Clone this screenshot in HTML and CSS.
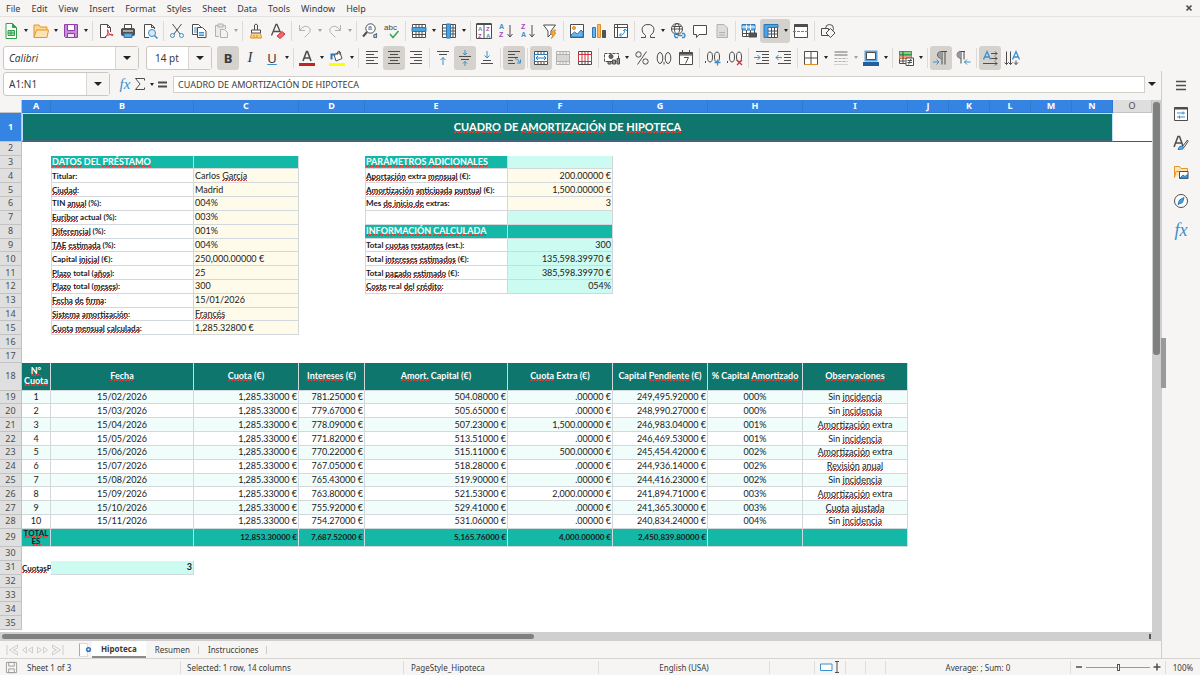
FILE: index.html
```
<!DOCTYPE html>
<html lang="es">
<head>
<meta charset="utf-8">
<title>Hipoteca</title>
<link rel="stylesheet" href="styles.css">
</head>

<body>
<nav class="menubar">
  <button>File</button><button>Edit</button><button>View</button><button>Insert</button><button>Format</button><button>Styles</button><button>Sheet</button><button>Data</button><button>Tools</button><button>Window</button><button>Help</button>
  <button class="close" aria-label="Close"><svg viewBox="0 0 8 8"><path d="M1.5 1.5l5 5M6.5 1.5l-5 5" stroke-width="1.7"/></svg></button>
</nav>

<!-- standard toolbar -->
<div class="toolbar" role="toolbar" aria-label="Standard">
  <button class="tb" aria-label="New"><svg viewBox="0 0 16 16"><path d="M3 .5h6.500l4 4v11H3z" fill="#fff" stroke="#33a04c"/><path d="M9.500.5v4h4z" fill="#33a04c" stroke="#33a04c"/><path d="M5 7.500h6.500v5H5zM5 10h6.500M8 7.500v5" fill="#a9ddb4" stroke="#33a04c"/></svg></button><button class="caret" aria-label="New options"></button>
  <button class="tb" aria-label="Open"><svg viewBox="0 0 16 16"><path d="M1 14.500V2h5l1.500 2H14v3" fill="#fbd79b" stroke="#e59728"/><path d="M1 14.500L3.500 7h12l-1.500 7.500z" fill="#fde2b3" stroke="#e59728"/></svg></button><button class="caret" aria-label="Open options"></button>
  <button class="tb" aria-label="Save"><svg viewBox="0 0 16 16"><path d="M1.500 1.500h13v13h-12l-1-1z" fill="#c98bd9" stroke="#8e3ea8"/><path d="M4.500 1.500h7v6h-7z" fill="#fff" stroke="#8e3ea8"/><path d="M4.500 10.500h7v4h-7z" fill="#f4e4f8" stroke="#8e3ea8"/></svg></button><button class="caret" aria-label="Save options"></button>
  <i class="sep"></i>
  <button class="tb" aria-label="Export as PDF"><svg viewBox="0 0 16 16"><path d="M8 14.500H2.500V1.500h7l3 3V9M9.500 1.500v3h3" fill="#fff"/><path d="M7 14c3-2 3.500-6 3-7-.8-1-1.500 1 1.500 4 1.500 1.500 4 2 3.500.8-.8-1-5-.3-8 2.200z" stroke="#d3303a"/></svg></button>
  <button class="tb" aria-label="Print"><svg viewBox="0 0 16 16"><path d="M4.500 6V1.500h7V6" fill="#fff"/><rect x="1.500" y="5.500" width="13" height="7" rx="1" fill="#4b5358"/><path d="M4 10.500h8v4H4z" fill="#62a9e0" stroke="#2b78b8"/><path d="M3 8h10" stroke="#fff"/></svg></button>
  <button class="tb" aria-label="Print Preview"><svg viewBox="0 0 16 16"><path d="M7 14.500H2.500V1.500h7l3 3V6M9.500 1.500v3h3" fill="#fff"/><circle cx="10" cy="10" r="3.500" fill="#d3e9f8" stroke="#3a8fcc"/><path d="M12.500 12.500l3 3" stroke="#3a8fcc" stroke-width="1.500"/></svg></button>
  <i class="sep"></i>
  <button class="tb" aria-label="Cut"><svg viewBox="0 0 16 16"><path d="M3.500 1l7.500 10M12.500 1L5 11"/><circle cx="3.500" cy="12.500" r="2" stroke="#3a8fcc"/><circle cx="12.500" cy="12.500" r="2" stroke="#3a8fcc"/></svg></button>
  <button class="tb" aria-label="Copy"><svg viewBox="0 0 16 16"><path d="M1.500 1.500h6l2.500 2.500v7.500H1.500z" fill="#fff"/><path d="M3 5h4M3 7h4M3 9h3" stroke="#3a8fcc"/><path d="M6.500 4.500h5l3.500 3.500v6.500H6.500z" fill="#fff"/><path d="M8 9.500h5M8 11h5M8 12.500h5" stroke="#3a8fcc"/></svg></button>
  <button class="tb" aria-label="Paste" disabled><svg viewBox="0 0 16 16"><path d="M6 13.500H2.500v-11h10V6" fill="#ddd"/><path d="M5 1h5v3H5z" fill="#ccc"/><path d="M7.500 6.500h4l3 3v5h-7z" fill="#eee"/></svg></button><button class="caret" aria-label="Paste options" disabled></button>
  <i class="sep"></i>
  <button class="tb" aria-label="Clone Formatting"><svg viewBox="0 0 16 16"><path d="M6.500 7V2q1.500-2 3 0v5"/><path d="M3.500 7h9v3h-9z" fill="#fff"/><path d="M3.500 10.500l-1 4.500h11l-1-4.500z" fill="#fbd18b" stroke="#e08f24"/><path d="M6 12v3M9 12v3" stroke="#e08f24"/></svg></button>
  <button class="tb" aria-label="Clear Formatting"><svg viewBox="0 0 16 16"><path d="M1.500 12.500L6 1.500h1l3.500 8M3.500 8.500h6" stroke-width="1.300"/><path d="M7 13l5-4.500 3 2.500-5 4.500z" fill="#f06b6b" stroke="#d3303a"/></svg></button>
  <i class="sep"></i>
  <button class="tb" aria-label="Undo" disabled><svg viewBox="0 0 16 16"><path d="M2.500 2v5.500H8M3 7q4-5.500 8.500-3 4 3.500-1 7.500l-3 3"/></svg></button><button class="caret" aria-label="Undo list" disabled></button>
  <button class="tb" aria-label="Redo" disabled><svg viewBox="0 0 16 16"><path d="M13.500 2v5.500H8M13 7Q9 1.500 4.500 4q-4 3.500 1 7.500l3 3"/></svg></button><button class="caret" aria-label="Redo list" disabled></button>
  <i class="sep"></i>
  <button class="tb" aria-label="Find and Replace"><svg viewBox="0 0 16 16"><circle cx="8.500" cy="5.500" r="4.700" fill="#fff"/><path d="M5 9l-4 4.500" stroke-width="2"/><text x="6" y="7" class="gb">a</text><text x="11" y="15" class="gd">d</text></svg></button>
  <button class="tb" aria-label="Spelling"><svg viewBox="0 0 16 16"><text x="0" y="7" class="gd abc">abc</text><path d="M6 11l3 3.500L14.500 8" stroke="#35a557" stroke-width="1.500"/></svg></button>
  <i class="sep"></i>
  <button class="tb" aria-label="Row"><svg viewBox="0 0 16 16"><path d="M1.500 1.500h13v13h-13z" fill="#fff"/><path d="M1 4.500h14v4H1z" fill="#4ba3df" stroke="#2b78b8"/><path d="M1.500 11.500h13M5 1.500v3M8 1.500v3M11 1.500v3M5 8.500v6M8 8.500v6M11 8.500v6"/></svg></button><button class="caret" aria-label="Row options"></button>
  <button class="tb" aria-label="Column"><svg viewBox="0 0 16 16"><path d="M1.500 1.500h13v13h-13z" fill="#fff"/><path d="M5.500 1h4v14h-4z" fill="#4ba3df" stroke="#2b78b8"/><path d="M12 1.500v13M1.500 5h4M1.500 8h4M1.500 11h4M9.500 5h5M9.500 8h5M9.500 11h5"/></svg></button><button class="caret" aria-label="Column options"></button>
  <i class="sep"></i>
  <button class="tb" aria-label="Sort"><svg viewBox="0 0 16 16"><path d="M.5 1h15v14.500H.5zM8 1v14" fill="#fff"/><path d="M.5 1h15" stroke-width="2"/><text x="2" y="8" class="gb sm">A</text><text x="2" y="15" class="gp sm">Z</text><text x="10" y="8" class="gp sm">Z</text><text x="10" y="15" class="gb sm">A</text></svg></button>
  <button class="tb" aria-label="Sort Ascending"><svg viewBox="0 0 16 16"><text x="1" y="6" class="gb">A</text><text x="1" y="14" class="gp">Z</text><path d="M12 2v12M9.500 11l2.500 3 2.500-3"/></svg></button>
  <button class="tb" aria-label="Sort Descending"><svg viewBox="0 0 16 16"><text x="1" y="6" class="gp">Z</text><text x="1" y="14" class="gb">A</text><path d="M12 2v12M9.500 11l2.500 3 2.500-3"/></svg></button>
  <button class="tb" aria-label="AutoFilter"><svg viewBox="0 0 16 16"><path d="M1.500 2h12L9 8v3l-3 3V8z" fill="#fff"/><path d="M11.500 7L9 11.500h2L9.500 15.500 14 10h-2l1.500-3z" fill="#fba94c" stroke="#e08f24"/></svg></button>
  <i class="sep"></i>
  <button class="tb" aria-label="Image"><svg viewBox="0 0 16 16"><path d="M1.500 1.500h13v13h-13z" fill="#fff"/><path d="M2 14v-2l3.500-3 3 2L12 7l2 2v5z" fill="#6db3e5" stroke="#2b78b8"/><circle cx="5" cy="5" r="1.500" fill="#fba94c" stroke="#e08f24"/></svg></button>
  <button class="tb" aria-label="Chart"><svg viewBox="0 0 16 16"><path d="M1.500 4.500h3v10h-3z" fill="#6db3e5" stroke="#2b78b8"/><path d="M6.500 1.500h3v13h-3z" fill="#fbb763" stroke="#e08f24"/><path d="M11.500 7.500h3v7h-3z" fill="#555"/></svg></button>
  <button class="tb" aria-label="Pivot Table"><svg viewBox="0 0 16 16"><path d="M1.500 1.500h13v13h-13zM1.500 4.500h13M4.500 1.500v13" fill="#fff"/><path d="M6.500 12q5 1 5.500-6M10 8l2-2 2 2M8.500 10l-2 2 2 2" stroke="#3a8fcc"/></svg></button>
  <i class="sep"></i>
  <button class="tb" aria-label="Special Character"><svg viewBox="0 0 16 16"><path d="M1 14.500h4.500v-2Q2 10 2 6.500 2.500 1.500 8 1.500t6 5q0 3.500-3.500 6v2H15"/></svg></button><button class="caret" aria-label="Recent characters"></button>
  <button class="tb" aria-label="Hyperlink"><svg viewBox="0 0 16 16"><circle cx="7" cy="6" r="5.500" fill="#fff"/><ellipse cx="7" cy="6" rx="2.500" ry="5.500"/><path d="M1.500 6h11M2.500 3.500h9"/><path d="M8 10.500H5.500q-2 2 0 4H8M12 10.500h2q2 2 0 4h-2M7.500 12.500h5" stroke="#3a8fcc" stroke-width="1.300"/></svg></button>
  <button class="tb" aria-label="Comment"><svg viewBox="0 0 16 16"><path d="M1.500 2.500h13v9H7L4.500 14.500v-3h-3z" fill="#fff"/></svg></button>
  <button class="tb" aria-label="Headers and Footers" disabled><svg viewBox="0 0 16 16"><path d="M3 1.500h7l3.500 3.500v9.500H3zM5 9.500h6M5 12h6" fill="#bbb"/></svg></button>
  <i class="sep"></i>
  <button class="tb" aria-label="Define Print Area"><svg viewBox="0 0 16 16"><path d="M1.500 1.500h12v12h-12zM1.500 10.500h12M5.500 7v6.500M9.500 7v6.500" fill="#fff"/><path d="M1 1.500h13v5.500H1z" fill="#6db3e5" stroke="#2b78b8"/><path d="M5.500 1.500V7M9.500 1.500V7M1 4h13" stroke="#fff"/><path d="M8 10h7.500v4H8z" fill="#4b5358"/></svg></button>
  <span class="pair on"><button class="tb" aria-label="Freeze Rows and Columns" aria-pressed="true"><svg viewBox="0 0 16 16"><path d="M1.500 1.500h13v13h-13z" fill="#fff"/><path d="M1 1.500h14v3H5v10H1z" fill="#4ba3df" stroke="#2b78b8"/><path d="M5 8h10M5 11h10M8.500 4.500v10M11.500 4.500v10"/></svg></button><button class="caret" aria-label="Freeze options"></button></span>
  <button class="tb" aria-label="Split Window"><svg viewBox="0 0 16 16"><path d="M1.500 1.500h13v13h-13z" fill="#fff"/><path d="M1.500 2.500h13" stroke-width="3"/><path d="M0 8.500h16" stroke="#3a8fcc" stroke-dasharray="3 1"/></svg></button>
  <i class="sep"></i>
  <button class="tb" aria-label="Show Draw Functions"><svg viewBox="0 0 16 16"><circle cx="9.500" cy="5.500" r="4"/><path d="M1.500 5.500h7v7h-7z" fill="#f6f5f4"/><path d="M10.500 5.500l4.500 4.500-4.500 4.500L6 10z" fill="#f6f5f4"/></svg></button>
</div>

<!-- formatting toolbar -->
<div class="toolbar format" role="toolbar" aria-label="Formatting">
  <span class="combo fontname"><input aria-label="Font Name" value="Calibri"><button aria-label="Font list"></button></span>
  <span class="combo fontsize"><input aria-label="Font Size" value="14 pt"><button aria-label="Size list"></button></span>
  <button class="tb on letter bold" aria-pressed="true">B</button>
  <button class="tb letter italic">I</button>
  <button class="tb letter under">U</button><button class="caret" aria-label="Underline options"></button>
  <i class="sep"></i>
  <button class="tb" aria-label="Font Color"><svg viewBox="0 0 16 16"><path d="M0 13h16v3H0z" fill="#c9211e" stroke="none"/><path d="M4 11L7.500 1.500h1L12 11M5 8h6" stroke-width="1.600"/></svg></button><button class="caret" aria-label="Font color list"></button>
  <button class="tb" aria-label="Background Color"><svg viewBox="0 0 16 16"><path d="M0 13h16v3H0z" fill="#ff0" stroke="none"/><path d="M5 4.500l6-2 2 6-6 2.500z" fill="#fff"/><path d="M8 5q0-4 2-4t1 4"/><path d="M2.500 9.500v-5h4" stroke="#2b78b8" stroke-width="2"/></svg></button><button class="caret" aria-label="Background color list"></button>
  <i class="sep"></i>
  <button class="tb" aria-label="Align Left"><svg viewBox="0 0 16 16"><path d="M2 1.500h12M2 4.500h8M2 7.500h12M2 10.500h8M2 13.500h12"/></svg></button>
  <button class="tb on" aria-label="Center Horizontally" aria-pressed="true"><svg viewBox="0 0 16 16"><path d="M2 1.500h12M4 4.500h8M2 7.500h12M4 10.500h8M2 13.500h12"/></svg></button>
  <button class="tb" aria-label="Align Right"><svg viewBox="0 0 16 16"><path d="M2 1.500h12M6 4.500h8M2 7.500h12M6 10.500h8M2 13.500h12"/></svg></button>
  <i class="sep"></i>
  <button class="tb" aria-label="Align Top"><svg viewBox="0 0 16 16"><path d="M2 1.500h12M4 4.500h8"/><path d="M8 15V7.500M5.500 10L8 7.500l2.500 2.500" stroke="#3a8fcc"/></svg></button>
  <button class="tb on" aria-label="Center Vertically" aria-pressed="true"><svg viewBox="0 0 16 16"><path d="M2 6.500h12M4 9.500h8"/><path d="M8 0v5M6 3l2 2 2-2M8 16v-4.500M6 13.500l2-2 2 2" stroke="#3a8fcc"/></svg></button>
  <button class="tb" aria-label="Align Bottom"><svg viewBox="0 0 16 16"><path d="M4 10.500h8M2 13.500h12"/><path d="M8 1v7M5.500 5.500L8 8l2.500-2.500" stroke="#3a8fcc"/></svg></button>
  <i class="sep"></i>
  <button class="tb on" aria-label="Wrap Text" aria-pressed="true"><svg viewBox="0 0 16 16"><path d="M2 1.500h12M2 4.500h7M2 7.500h10M2 10.500h5M2 13.500h7"/><path d="M9 8.500q3 0 5 4.500M14.500 9.500V13H11" stroke="#3a8fcc"/></svg></button>
  <i class="sep"></i>
  <button class="tb on" aria-label="Merge and Center Cells" aria-pressed="true"><svg viewBox="0 0 16 16"><path d="M1.500 1.500h13v13h-13zM5 1.500v13M8 1.500v13M11 1.500v13" fill="#fff"/><path d="M1.500 4.500h13v7h-13z" fill="#fff" stroke="#2b78b8"/><path d="M3 8h10M5 6L3 8l2 2M11 6l2 2-2 2" stroke="#2b78b8"/></svg></button>
  <button class="tb" aria-label="Merge Cells" disabled><svg viewBox="0 0 16 16"><path d="M1.500 1.500h13v13h-13zM5 1.500v13M8 1.500v13M11 1.500v13" fill="#eee"/><path d="M1.500 4.500h13v7h-13z" fill="#aaa"/></svg></button>
  <button class="tb" aria-label="Unmerge Cells"><svg viewBox="0 0 16 16"><path d="M1.500 1.500h13v13h-13zM5 1.500v13M8 1.500v13M11 1.500v13" fill="#fff"/><path d="M1.500 4.500h13v7h-13zM5 4.500v7M8 4.500v7M11 4.500v7" fill="#fff" stroke="#d3303a"/></svg></button>
  <i class="sep"></i>
  <button class="tb" aria-label="Format as Currency"><svg viewBox="0 0 16 16"><path d="M.5 3.500h14v8H.5z" fill="#fff" stroke-dasharray="3 1"/><circle cx="7" cy="6.500" r="2" fill="#666"/><path d="M4 11.500h3v2.500H4zM8.500 10h3v4h-3zM13 8.500h2.500V14H13z" fill="#999"/></svg></button><button class="caret" aria-label="Currency list"></button>
  <button class="tb" aria-label="Format as Percent"><svg viewBox="0 0 16 16"><circle cx="4.500" cy="4.500" r="2.700"/><circle cx="11.500" cy="11.500" r="2.700"/><path d="M12.500 1.500l-9 13"/></svg></button>
  <button class="tb" aria-label="Format as Number"><svg viewBox="0 0 16 16"><ellipse cx="4" cy="8" rx="2.800" ry="5.500"/><ellipse cx="12" cy="8" rx="2.800" ry="5.500"/><path d="M8 12v2.500"/></svg></button>
  <button class="tb" aria-label="Format as Date"><svg viewBox="0 0 16 16"><path d="M1.500 2.500h13v12h-13zM1.500 5h13M4.500 0v4M11.500 0v4" fill="#fff"/><path d="M1.500 3.500h13" stroke-width="2"/><path d="M6 7.500h4.500l-3 6"/></svg></button>
  <i class="sep"></i>
  <button class="tb" aria-label="Add Decimal Place"><svg viewBox="0 0 16 16"><ellipse cx="5" cy="7" rx="2.500" ry="5"/><ellipse cx="12" cy="7" rx="2.500" ry="5"/><path d="M.5 11v2"/><path d="M9.500 12.500h6M12.500 9.500v6" stroke="#3a8fcc" stroke-width="1.300"/></svg></button>
  <button class="tb" aria-label="Delete Decimal Place"><svg viewBox="0 0 16 16"><ellipse cx="5" cy="7" rx="2.500" ry="5"/><ellipse cx="12" cy="7" rx="2.500" ry="5"/><path d="M.5 11v2"/><path d="M10 10l5 5M15 10l-5 5" stroke="#d3303a" stroke-width="1.300"/></svg></button>
  <i class="sep"></i>
  <button class="tb" aria-label="Increase Indent"><svg viewBox="0 0 16 16"><path d="M2 1.500h13M8 4.500h7M8 7.500h7M8 10.500h7M2 13.500h13"/><path d="M0 7.500h6M3.500 5L6 7.500 3.500 10" stroke="#3a8fcc"/></svg></button>
  <button class="tb" aria-label="Decrease Indent"><svg viewBox="0 0 16 16"><path d="M2 1.500h13M8 4.500h7M8 7.500h7M8 10.500h7M2 13.500h13"/><path d="M6 7.500H0M2.500 5L0 7.500 2.500 10" stroke="#3a8fcc"/></svg></button>
  <i class="sep"></i>
  <button class="tb" aria-label="Borders"><svg viewBox="0 0 16 16"><path d="M1.500 1.500h13v13h-13zM8 1.500v13M1.500 8h13" fill="#fff"/><path d="M1.500 14.500h13" stroke="#e08f24"/></svg></button><button class="caret" aria-label="Border list"></button>
  <button class="tb" aria-label="Border Style" disabled><svg viewBox="0 0 16 16"><path d="M1.500 2h13M1.500 5h13" stroke-width="2"/><path d="M1.500 8.500h13M1.500 11.500h13" stroke-dasharray="3 1"/><path d="M1.500 14.500h13" stroke-dasharray="1 1"/></svg></button><button class="caret" aria-label="Border style list" disabled></button>
  <button class="tb" aria-label="Border Color"><svg viewBox="0 0 16 16"><path d="M0 12h16v4H0z" fill="#235f9c" stroke="none"/><path d="M2.500 1.500h11v9h-11z" fill="#fff" stroke="#5ea4dc" stroke-width="2"/><path d="M3.500 2.500h9v7h-9z"/></svg></button><button class="caret" aria-label="Border color list"></button>
  <i class="sep"></i>
  <button class="tb" aria-label="Conditional Formatting"><svg viewBox="0 0 16 16"><path d="M1.500 1.500h12v12h-12z" fill="#fff"/><path d="M1.500 1.500h12v3h-12z" fill="#7fd08f" stroke="#33a04c"/><path d="M1.500 5.500h12v3h-12z" fill="#f29a9a" stroke="#e5772f"/><path d="M1.500 11h6M5 1.500v12"/><path d="M8 8h7.500v7.500H8zM9.500 10.500h4.500M9.500 12.500h4.500M13 9l-2.500 5.500" fill="#fff"/></svg></button><button class="caret" aria-label="Conditional list"></button>
  <i class="sep"></i>
  <button class="tb on" aria-label="Left-To-Right" aria-pressed="true"><svg viewBox="0 0 16 16"><path d="M14 1.500H7.500q-3 .5-3 3.500t4 3.500M9 1.500v13M12 1.500v13"/><path d="M9 1.500v7q-4-.5-4-3.500t4-3.500" fill="#999" stroke="none"/><path d="M0 12h6M3.500 9.500L6 12l-2.500 2.500" stroke="#3a8fcc"/></svg></button>
  <button class="tb" aria-label="Right-To-Left"><svg viewBox="0 0 16 16"><path d="M10 1.500H5q-3 .5-3 3.500T6 8.500M6 1.500v12M9 1.500v8"/><path d="M6 1.500v7Q2 8 2 5t4-3.500" fill="#999" stroke="none"/><path d="M15.500 12H9M12 9.500L9.500 12l2.500 2.500" stroke="#3a8fcc"/></svg></button>
  <i class="sep"></i>
  <button class="tb on" aria-label="Text direction from left to right" aria-pressed="true"><svg viewBox="0 0 16 16"><path d="M1.500 9.500L5 1.500l3.500 8M3 7h4" stroke="#3a8fcc" stroke-width="1.300"/><path d="M9 3.500h6M9 8.500h6M1 13.500h14M13 1.500l2 2-2 2M13 6.500l2 2-2 2M13 11.500l2 2-2 2"/></svg></button>
  <button class="tb" aria-label="Text direction from top to bottom"><svg viewBox="0 0 16 16"><path d="M8.500 9.500L12 1.500l3.500 8M10 7h4" stroke="#3a8fcc" stroke-width="1.300"/><path d="M2.500 1.500v13M6.500 1.500v13M12 10.500v4M.5 12.500l2 2 2-2M4.500 12.500l2 2 2-2M10 12.500l2 2 2-2"/></svg></button>
</div>

<div class="work">
<div class="main">

<div class="formulabar">
  <span class="combo namebox"><input aria-label="Name Box" value="A1:N1"><button aria-label="Names"></button></span>
  <button class="fb fx">fx</button>
  <button class="fb sigma" aria-label="Select Function"><svg viewBox="0 0 12 16"><path d="M10.500 4.500v-2h-9L6 8l-4.500 5.500h9v-2"/></svg></button><button class="caret" aria-label="Functions"></button>
  <button class="fb" aria-label="Formula"><svg viewBox="0 0 12 16"><path d="M2 6.500h9M2 10.500h9" stroke-width="2"/></svg></button>
  <input class="formula" aria-label="Formula input" value="CUADRO DE AMORTIZACIÓN DE HIPOTECA">
  <button class="caret big" aria-label="Expand Formula Bar"></button>
</div>

<div class="sheetrow">
<div class="sheet">
<table>
  <colgroup>
    <col class="w22"><col class="w29"><col class="w143"><col class="w105"><col class="w66"><col class="w143"><col class="w105"><col class="w95"><col class="w95"><col class="w105"><col class="w41"><col class="w41"><col class="w41"><col class="w41"><col class="w41"><col>
  </colgroup>
  <thead>
  <tr><th class="corner"></th><th>A</th><th>B</th><th>C</th><th>D</th><th>E</th><th>F</th><th>G</th><th>H</th><th>I</th><th>J</th><th>K</th><th>L</th><th>M</th><th>N</th><th class="plain">O</th></tr>
  </thead>
  <tbody>
  <tr class="r1"><th class="sel">1</th><td colspan="14" class="title"><span class="sp">CUADRO</span> DE <span class="sp">AMORTIZACIÓN</span> DE <span class="sp">HIPOTECA</span></td><td class="freeze"></td></tr>
  <tr><th>2</th><td colspan="15"></td></tr>
  <tr><th>3</th><td></td><td class="head"><span class="sp">DATOS</span> DEL <span class="sp">PRÉSTAMO</span></td><td class="head"></td><td></td><td class="head"><span class="sp">PARÁMETROS</span> <span class="sp">ADICIONALES</span></td><td class="mint"></td></tr>
  <tr><th>4</th><td></td><td class="lab">Titular:</td><td class="in">Carlos <span class="sp">García</span></td><td></td><td class="lab"><span class="sp">Aportación</span> extra <span class="sp">mensual</span> (€):</td><td class="in num">200.00000 €</td></tr>
  <tr><th>5</th><td></td><td class="lab"><span class="sp">Ciudad</span>:</td><td class="in">Madrid</td><td></td><td class="lab"><span class="sp">Amortización</span> <span class="sp">anticipada</span> <span class="sp">puntual</span> (€):</td><td class="in num">1,500.00000 €</td></tr>
  <tr><th>6</th><td></td><td class="lab">TIN <span class="sp">anual</span> (%):</td><td class="in">004%</td><td></td><td class="lab">Mes <span class="sp">de inicio de</span> extras:</td><td class="in num">3</td></tr>
  <tr><th>7</th><td></td><td class="lab"><span class="sp">Euríbor</span> actual (%):</td><td class="in">003%</td><td></td><td class="lab"></td><td class="mint"></td></tr>
  <tr><th>8</th><td></td><td class="lab"><span class="sp">Diferencial</span> (%):</td><td class="in">001%</td><td></td><td class="head"><span class="sp">INFORMACIÓN</span> <span class="sp">CALCULADA</span></td><td class="head"></td></tr>
  <tr><th>9</th><td></td><td class="lab"><span class="sp">TAE</span> <span class="sp">estimada</span> (%):</td><td class="in">004%</td><td></td><td class="lab">Total <span class="sp">cuotas</span> <span class="sp">restantes</span> (est.):</td><td class="mint num">300</td></tr>
  <tr><th>10</th><td></td><td class="lab">Capital <span class="sp">inicial</span> (€):</td><td class="in">250,000.00000 €</td><td></td><td class="lab">Total <span class="sp">intereses</span> <span class="sp">estimados</span> (€):</td><td class="mint num">135,598.39970 €</td></tr>
  <tr><th>11</th><td></td><td class="lab"><span class="sp">Plazo</span> total (<span class="sp">años</span>):</td><td class="in">25</td><td></td><td class="lab">Total <span class="sp">pagado</span> <span class="sp">estimado</span> (€):</td><td class="mint num">385,598.39970 €</td></tr>
  <tr><th>12</th><td></td><td class="lab"><span class="sp">Plazo</span> total (<span class="sp">meses</span>):</td><td class="in">300</td><td></td><td class="lab"><span class="sp">Coste</span> real <span class="sp">del</span> <span class="sp">crédito</span>:</td><td class="mint num">054%</td></tr>
  <tr><th>13</th><td></td><td class="lab"><span class="sp">Fecha</span> <span class="sp">de</span> <span class="sp">firma</span>:</td><td class="in">15/01/2026</td></tr>
  <tr><th>14</th><td></td><td class="lab"><span class="sp">Sistema</span> <span class="sp">amortización</span>:</td><td class="in"><span class="sp">Francés</span></td></tr>
  <tr><th>15</th><td></td><td class="lab"><span class="sp">Cuota</span> <span class="sp">mensual</span> <span class="sp">calculada</span>:</td><td class="in">1,285.32800 €</td></tr>
  <tr><th>16</th></tr>
  <tr><th>17</th></tr>
  <tr class="cols"><th>18</th><td><span class="sp">N°</span><br><span class="sp">Cuota</span></td><td><span class="sp">Fecha</span></td><td><span class="sp">Cuota</span> (€)</td><td><span class="sp">Intereses</span> (€)</td><td><span class="sp">Amort.</span> Capital (€)</td><td><span class="sp">Cuota</span> Extra (€)</td><td>Capital <span class="sp">Pendiente</span> (€)</td><td>% Capital <span class="sp">Amortizado</span></td><td><span class="sp">Observaciones</span></td></tr>
  <tr class="d odd"><th>19</th><td>1</td><td>15/02/2026</td><td class="num">1,285.33000 €</td><td class="num">781.25000 €</td><td class="num">504.08000 €</td><td class="num">.00000 €</td><td class="num">249,495.92000 €</td><td>000%</td><td>Sin <span class="sp">incidencia</span></td></tr>
  <tr class="d"><th>20</th><td>2</td><td>15/03/2026</td><td class="num">1,285.33000 €</td><td class="num">779.67000 €</td><td class="num">505.65000 €</td><td class="num">.00000 €</td><td class="num">248,990.27000 €</td><td>000%</td><td>Sin <span class="sp">incidencia</span></td></tr>
  <tr class="d odd"><th>21</th><td>3</td><td>15/04/2026</td><td class="num">1,285.33000 €</td><td class="num">778.09000 €</td><td class="num">507.23000 €</td><td class="num">1,500.00000 €</td><td class="num">246,983.04000 €</td><td>001%</td><td><span class="sp">Amortización</span> extra</td></tr>
  <tr class="d"><th>22</th><td>4</td><td>15/05/2026</td><td class="num">1,285.33000 €</td><td class="num">771.82000 €</td><td class="num">513.51000 €</td><td class="num">.00000 €</td><td class="num">246,469.53000 €</td><td>001%</td><td>Sin <span class="sp">incidencia</span></td></tr>
  <tr class="d odd"><th>23</th><td>5</td><td>15/06/2026</td><td class="num">1,285.33000 €</td><td class="num">770.22000 €</td><td class="num">515.11000 €</td><td class="num">500.00000 €</td><td class="num">245,454.42000 €</td><td>002%</td><td><span class="sp">Amortización</span> extra</td></tr>
  <tr class="d"><th>24</th><td>6</td><td>15/07/2026</td><td class="num">1,285.33000 €</td><td class="num">767.05000 €</td><td class="num">518.28000 €</td><td class="num">.00000 €</td><td class="num">244,936.14000 €</td><td>002%</td><td><span class="sp">Revisión</span> <span class="sp">anual</span></td></tr>
  <tr class="d odd"><th>25</th><td>7</td><td>15/08/2026</td><td class="num">1,285.33000 €</td><td class="num">765.43000 €</td><td class="num">519.90000 €</td><td class="num">.00000 €</td><td class="num">244,416.23000 €</td><td>002%</td><td>Sin <span class="sp">incidencia</span></td></tr>
  <tr class="d"><th>26</th><td>8</td><td>15/09/2026</td><td class="num">1,285.33000 €</td><td class="num">763.80000 €</td><td class="num">521.53000 €</td><td class="num">2,000.00000 €</td><td class="num">241,894.71000 €</td><td>003%</td><td><span class="sp">Amortización</span> extra</td></tr>
  <tr class="d odd"><th>27</th><td>9</td><td>15/10/2026</td><td class="num">1,285.33000 €</td><td class="num">755.92000 €</td><td class="num">529.41000 €</td><td class="num">.00000 €</td><td class="num">241,365.30000 €</td><td>003%</td><td><span class="sp">Cuota</span> <span class="sp">ajustada</span></td></tr>
  <tr class="d"><th>28</th><td>10</td><td>15/11/2026</td><td class="num">1,285.33000 €</td><td class="num">754.27000 €</td><td class="num">531.06000 €</td><td class="num">.00000 €</td><td class="num">240,834.24000 €</td><td>004%</td><td>Sin <span class="sp">incidencia</span></td></tr>
  <tr class="total"><th>29</th><td class="word"><span class="sp">TOTAL</span><br><span class="sp">ES</span></td><td></td><td>12,853.30000 €</td><td>7,687.52000 €</td><td>5,165.76000 €</td><td>4,000.00000 €</td><td>2,450,839.80000 €</td><td></td><td></td></tr>
  <tr><th>30</th></tr>
  <tr><th>31</th><td class="cut"><span class="sp">Cuotas</span>P</td><td class="mint num strong">3</td></tr>
  <tr><th>32</th></tr>
  <tr><th>33</th></tr>
  <tr><th>34</th></tr>
  <tr><th>35</th></tr>
  </tbody>
</table>
</div>
<div class="vscroll"><div class="thumb"></div></div>
</div>

<div class="hscroll"><div class="thumb"></div><div class="end"></div></div>

<div class="tabs">
  <button class="nav" aria-label="First sheet"><svg viewBox="0 0 14 12"><path d="M1.500 1v10M12 1L4 6l8 5V8L8 6l4-2z"/></svg></button>
  <button class="nav" aria-label="Previous sheet"><svg viewBox="0 0 14 12"><path d="M6 3v6L2 6zM12 3v6L8 6z"/></svg></button>
  <button class="nav" aria-label="Next sheet"><svg viewBox="0 0 14 12"><path d="M2 3v6l4-3zM8 3v6l4-3z"/></svg></button>
  <button class="nav" aria-label="Last sheet"><svg viewBox="0 0 14 12"><path d="M12.500 1v10M2 1l8 5-8 5V8l4-2-4-2z"/></svg></button>
  <button class="add" aria-label="Add Sheet"><svg viewBox="0 0 14 14"><path d="M1.500.5h8v13h-8z" fill="#fff" stroke="#ddd"/><path d="M1.500 13V.5" stroke="#aaa"/><circle cx="10.500" cy="6.500" r="1.800" stroke="#2b6fc0" stroke-width="1.500" fill="#fff"/></svg></button>
  <button class="tab active">Hipoteca</button>
  <button class="tab">Resumen</button>
  <button class="tab">Instrucciones</button>
</div>
</div>

<aside class="sidebar">
  <button aria-label="Sidebar Settings"><svg viewBox="0 0 16 16"><path d="M3 4.500h10M3 8.500h10M3 12.500h10" stroke-width="1.500"/></svg></button>
  <button aria-label="Properties"><svg viewBox="0 0 16 16"><path d="M1.500 1.500h13v13h-13z" fill="#fff"/><path d="M1.500 2.500h13" stroke-width="2"/><path d="M4 7h8M10 5.500v3M4 11h8M6.500 9.500v3" stroke="#3a8fcc"/></svg></button>
  <button aria-label="Styles"><svg viewBox="0 0 16 16"><path d="M1 12L5 1.500h1.500L10 11M3 8h5.500" stroke-width="1.500"/><path d="M14.500 5l-5 6.500 1.500 1 4-6z" fill="#fff"/><path d="M5 14.500q1-4 4-3.500 2 1 1 3z" fill="#6db3e5" stroke="#2b78b8"/></svg></button>
  <button aria-label="Gallery"><svg viewBox="0 0 16 16"><path d="M1.500 13.500v-11h5L8 4.500h6.500v3M1.500 13.500L3 7.500h12" fill="#fde2b3" stroke="#e59728"/><path d="M6.500 7.500h8.500v7H6.500z" fill="#fff"/><path d="M7 14l3-3 2 1.500 2.500-2V14z" fill="#4ba3df" stroke="#2b78b8"/></svg></button>
  <button aria-label="Navigator"><svg viewBox="0 0 16 16"><circle cx="8" cy="8" r="6.500" fill="#fff"/><path d="M11 4.500L9.500 9.500l-4.500 2L6.500 7z" fill="#4ba3df" stroke="#2b78b8"/></svg></button>
  <button class="fx" aria-label="Functions">fx</button>
  <div class="handle"></div>
</aside>
</div>

<footer class="status">
  <span class="doc"><svg viewBox="0 0 14 14"><path d="M1.500 1.500h11v11h-11zM4 1.500h6v4H4zM4 8.500h6v4H4z"/></svg></span>
  <span class="s1">Sheet 1 of 3</span>
  <span class="s2">Selected: 1 row, 14 columns</span>
  <span class="s3">PageStyle_Hipoteca</span>
  <span class="s4">English (USA)</span>
  <span class="s5"></span>
  <span class="s6"><svg viewBox="0 0 20 12"><path d="M.5 3h11.500v6.500H.5z" fill="#fff" stroke="#3a8fcc"/><path d="M15 .5h4M17 .5v11M15 11.500h4"/></svg></span>
  <span class="s7"></span>
  <span class="s7"></span>
  <span class="s8">Average: ; Sum: 0</span>
  <span class="zoom"><button aria-label="Zoom out"><svg viewBox="0 0 8 8"><path d="M1 4h6" stroke-width="1.500"/></svg></button><input type="range" aria-label="Zoom" value="50"><button aria-label="Zoom in"><svg viewBox="0 0 8 8"><path d="M.5 4h7M4 .5v7" stroke-width="1.500"/></svg></button></span>
  <span class="pct">100%</span>
</footer>
</body>
</html>
```

FILE: styles.css
```
* { box-sizing: border-box; }

body {
  margin: 0;
  height: 100vh;
  display: flex;
  flex-direction: column;
  overflow: hidden;
  background: #f6f5f4;
  color: #3a3a3a;
  font: 9px "Noto Sans", sans-serif;
}

button, input {
  margin: 0;
  padding: 0;
  border: 0;
  background: none;
  color: inherit;
  font: inherit;
}

svg {
  display: block;
  width: 16px;
  height: 16px;
  overflow: visible;
  fill: none;
  stroke: #4d4d4d;
  stroke-width: 1;
}

svg text { stroke: none; font: bold 7px "Liberation Sans", sans-serif; }
svg .sm { font-size: 6px; }
svg .abc { font-size: 8px; font-weight: normal; }
.gb { fill: #3a8fcc; }
.gp { fill: #a347ba; }
.gd { fill: #444; }

/* menu */
.menubar {
  display: flex;
  flex: none;
  align-items: center;
  gap: 1px;
  height: 17px;
  padding-left: 1px;
  border-bottom: 1px solid #e3e2e0;
}
.menubar button { padding: 0 5px; }
.menubar .close { margin-left: auto; padding-right: 7px; }
.close svg { width: 8px; height: 8px; }

/* toolbars */
.toolbar {
  display: flex;
  flex: none;
  align-items: center;
  height: 27px;
}
.tb {
  display: flex;
  flex: none;
  align-items: center;
  justify-content: center;
  width: 22px;
  height: 24px;
  border-radius: 3px;
}
.on { background: #d5d2ce; border-radius: 3px; }
.tb:disabled, .caret:disabled { opacity: .4; }
.pair { display: flex; }
.caret {
  flex: none;
  width: 8px;
  height: 24px;
}
.caret::after, .combo button::after {
  content: "";
  display: block;
  width: 0;
  margin: 0 auto;
  border: 2px solid transparent;
  border-top: 3px solid #222;
  border-bottom: 0;
}
.caret.big { width: 14px; }
.caret.big::after, .combo button::after { border-width: 4px 4px 0; }
.sep {
  flex: none;
  width: 1px;
  height: 20px;
  margin: 0 2px;
  background: #dddbd9;
}
.format { padding-left: 3px; }
.letter { font-size: 13px; }
.bold { font-weight: bold; }
.italic { font-family: "Liberation Serif", serif; font-style: italic; font-size: 15px; }
.under { text-decoration: underline; text-decoration-color: #3a8fcc; }

.combo {
  display: flex;
  flex: none;
  height: 24px;
  border: 1px solid #cdc7c2;
  border-radius: 3px;
  background: #fff;
  font-size: 10px;
}
.combo input { flex: 1; min-width: 0; padding-left: 5px; }
.combo button { width: 23px; border-left: 1px solid #dad6d2; background: #f6f5f4; }
.fontname { width: 136px; margin-right: 7px; }
.fontname input { font-style: italic; }
.fontsize { width: 66px; margin-right: 5px; }
.fontsize input { padding-left: 8px; }

/* work area */
.work { flex: 1; display: flex; min-height: 0; }
.main { flex: 1; display: flex; flex-direction: column; min-width: 0; }

.formulabar {
  display: flex;
  flex: none;
  align-items: center;
  height: 29px;
  padding: 0 2px 3px 3px;
}
.namebox { width: 107px; margin-right: 6px; }
.fb { flex: none; width: 14px; }
.fb svg { width: 12px; }
.fx { color: #3a8fcc; font: italic 15px "Liberation Serif", serif; }
.fb.fx { width: 18px; }
.formula {
  flex: 1;
  min-width: 0;
  height: 17px;
  margin-left: 3px;
  padding-left: 4px;
  border: 1px solid #d3d0cc;
  background: #fff;
}

.sheetrow { flex: 1; display: flex; min-height: 0; }
.sheet {
  flex: 1;
  min-width: 0;
  padding-bottom: 2px;
  background: #fff;
  color: #1a1a1a;
  font: 9px/12px Lato, sans-serif;
}
table {
  width: 100%;
  height: 100%;
  table-layout: fixed;
  border-spacing: 0;
}
tr { height: 13px; }
th, td { padding: 0 1px; white-space: nowrap; text-align: left; }
th {
  overflow: hidden;
  padding: 0;
  border-right: 1px solid #c3c3c3;
  border-bottom: 1px solid #c3c3c3;
  background: #e0dfdf;
  color: #4d4d4d;
  font: 9px/12px "Noto Sans", sans-serif;
  text-align: center;
}
thead th { border-color: #3178cf; background: #3584e4; color: #fff; font-weight: bold; }
thead .corner { border-color: #c3c3c3; background: #f6f5f4; }
thead .plain { border-color: #c3c3c3; background: #dedede; color: #4d4d4d; font-weight: normal; }
.sel { background: #3584e4; color: #fff; font-weight: bold; }

.w22 { width: 22px; }
.w29 { width: 29px; }
.w41 { width: 41px; }
.w66 { width: 66px; }
.w95 { width: 95px; }
.w105 { width: 105px; }
.w143 { width: 143px; }

/* spelling marks */
.sp {
  background: linear-gradient(135deg, transparent 30%, #d8403c 30% 70%, transparent 70%) left bottom / 3px 2px repeat-x;
}

.r1 { height: 27px; }
.title {
  border: 1px solid #bfe0ff;
  border-bottom: 2px solid #46617c;
  background: #0f766e;
  color: #fff;
  font-size: 11px;
  font-weight: bold;
  text-align: center;
}
.freeze { border-bottom: 1px solid #555; }
.head, .lab, .in, .mint, .d td, .cols td, .total td {
  border-right: 1px solid #d3d8dc;
  border-bottom: 1px solid #d3d8dc;
}
.head { background: #14b8a6; color: #fff; font-weight: bold; }
.lab { padding-left: 0; border-left: 1px solid #d3d8dc; font-size: 8px; font-weight: bold; }
.in { background: #fffbeb; }
.mint { background: #ccfbf1; }
.strong { font-weight: bold; }
.cols { height: 26px; }
.cols td { background: #0f766e; color: #fff; font-weight: bold; line-height: 10px; text-align: center; }
.d td { text-align: center; }
td.num, .d td.num { text-align: right; }
.odd td { background: #f0fdfa; }
.total { height: 17px; }
.total td { background: #14b8a6; font-size: 8px; font-weight: bold; text-align: right; }
.total .word { line-height: 8px; text-align: center; }
.cut { overflow: hidden; padding: 0; font-size: 8px; font-weight: bold; }

/* scrollbars */
.vscroll { width: 9px; padding: 2px 1px; background: #cfcfcf; }
.vscroll .thumb { height: 48%; border-radius: 3px; background: #7e8180; }
.hscroll { display: flex; flex: none; justify-content: space-between; height: 9px; padding: 2px; background: #cfcfcf; }
.hscroll .thumb { width: 46%; border-radius: 3px; background: #7e8180; }
.hscroll .end { width: 2px; margin-right: 8px; background: #555; }

/* sheet tabs */
.tabs { display: flex; flex: none; align-items: center; height: 17px; padding-left: 5px; font-size: 8px; }
.nav svg { width: 15px; height: 12px; stroke: #cfcecc; }
.add { margin: 0 0 0 13px; }
.add svg { width: 14px; height: 14px; }
.tab { height: 17px; padding: 0 9px; }
.tab + .tab { background: linear-gradient(#ccc, #ccc) no-repeat right center / 1px 8px; }
.active { border-bottom: 2px solid #8a8c8b; background: #fff; font-weight: bold; }

.sidebar {
  position: relative;
  display: flex;
  flex: none;
  flex-direction: column;
  align-items: center;
  gap: 5px;
  width: 39px;
  padding-top: 2px;
  border-left: 1px solid #cfcdca;
}
.sidebar button { display: flex; align-items: center; justify-content: center; width: 24px; height: 24px; }
.sidebar .fx { font-size: 18px; }
.handle {
  position: absolute;
  left: -1px;
  top: 267px;
  width: 5px;
  height: 50px;
  background: #9a9a9a;
}

/* status bar */
.status { display: flex; flex: none; align-items: center; height: 17px; border-top: 1px solid #d5d3d0; font-size: 8px; }
.status > span { display: flex; flex: none; align-items: center; height: 13px; border-right: 1px solid #e0dedb; }
.status .doc { width: 22px; padding-left: 5px; border: 0; }
.doc svg { width: 13px; height: 13px; stroke: #999; }
.status .s1 { width: 159px; padding-left: 5px; }
.status .s2 { width: 223px; padding-left: 6px; }
.status .s3 { width: 195px; padding-left: 7px; }
.status .s4 { width: 171px; justify-content: center; }
.status .s5 { width: 45px; }
.status .s6 { width: 31px; justify-content: center; }
.s6 svg { width: 20px; height: 12px; }
.status .s7 { width: 20px; }
.status .s8 { flex: 1; justify-content: center; }
.status .zoom { width: 95px; justify-content: center; gap: 3px; }
.zoom svg { width: 8px; height: 8px; }
.zoom input { width: 64px; height: 10px; appearance: none; background: linear-gradient(#999, #999) no-repeat center / 100% 1px; }
.zoom input::-webkit-slider-thumb { appearance: none; width: 3px; height: 7px; border: 1px solid #555; background: #fff; }
.status .pct { width: 34px; justify-content: center; border: 0; }
```
